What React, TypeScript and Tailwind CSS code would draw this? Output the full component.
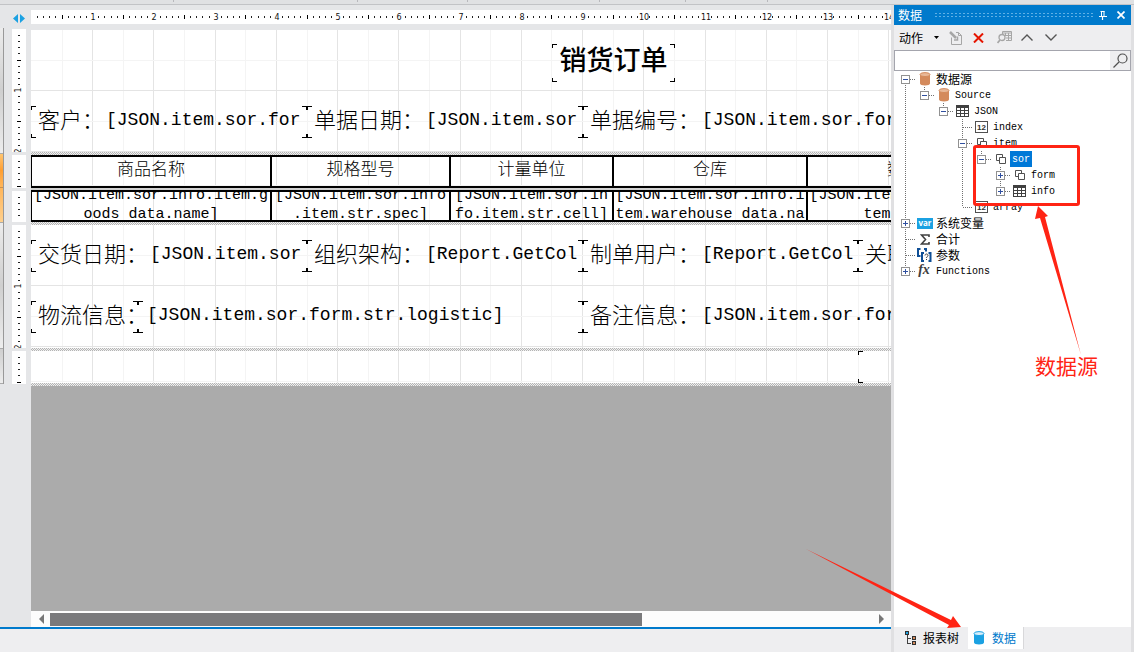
import { useState } from "react";

const UNIT = 61.23;

function HorizontalRuler() {
  const steps = Array.from({ length: 320 }, (_, i) => i + 1);
  return (
    <svg className="block h-[14px] w-full bg-white" shapeRendering="crispEdges" aria-hidden="true">
      {steps.map((i) => {
        const x = Math.round((i * UNIT) / 10);
        if (i % 10 === 0) {
          return (
            <text key={i} x={x + 1} y="10" textAnchor="middle" fontSize="8" fontFamily="DejaVu Sans" fill="#111">
              {i / 10}
            </text>
          );
        }
        if (i % 10 === 5) return <rect key={i} x={x} y="5" width="1" height="4" fill="#000" />;
        return <rect key={i} x={x} y="6" width="1" height="2" fill="#222" />;
      })}
    </svg>
  );
}

function VerticalRuler({ height }: { height: number }) {
  const count = Math.floor(((height + 2) * 10) / UNIT);
  const steps = Array.from({ length: count }, (_, i) => i + 1);
  return (
    <svg width="14" height={height} className="block bg-white" shapeRendering="crispEdges" aria-hidden="true">
      {steps.map((i) => {
        const y = Math.round((i * UNIT) / 10);
        if (i % 10 === 0) {
          return (
            <text key={i} x="9" y={y} textAnchor="middle" fontSize="8" fontFamily="DejaVu Sans" fill="#111" transform={`rotate(-90 9 ${y})`}>
              {i / 10}
            </text>
          );
        }
        if (i % 10 === 5) return <rect key={i} x="5" y={y} width="4" height="1" fill="#000" />;
        return <rect key={i} x="6" y={y} width="2" height="1" fill="#222" />;
      })}
    </svg>
  );
}

function Grid() {
  const lines = Array.from({ length: 64 }, (_, i) => i + 1);
  return (
    <svg className="absolute inset-0 h-full w-full" shapeRendering="crispEdges" aria-hidden="true">
      {lines.map((i) => (
        <rect key={`v${i}`} x={Math.round((i * UNIT) / 2)} y="0" width="1" height="100%" fill={i % 2 ? "#f4f4f4" : "#e4e4e4"} />
      ))}
      {lines.slice(0, 4).map((i) => (
        <rect key={`h${i}`} x="0" y={Math.round((i * UNIT) / 2) - 1} width="100%" height="1" fill={i % 2 ? "#f4f4f4" : "#e4e4e4"} />
      ))}
    </svg>
  );
}

function Hatch() {
  return <div className="h-[3px] shrink-0 bg-[repeating-conic-gradient(#b4b4b4_0_25%,#f0f0f0_0_50%)] bg-[length:2px_2px]" />;
}

function Corners() {
  return (
    <>
      <span className="absolute top-0 left-0 h-1 w-[5px] border-t border-l border-black" />
      <span className="absolute top-0 right-0 h-1 w-[5px] border-t border-r border-black" />
      <span className="absolute bottom-0 left-0 h-1 w-[5px] border-b border-l border-black" />
      <span className="absolute right-0 bottom-0 h-1 w-[5px] border-r border-b border-black" />
    </>
  );
}

function Field({ label, value, width }: { label?: string; value?: string; width: string }) {
  return (
    <div className={`relative h-8 shrink-0 ${width}`}>
      <Corners />
      <div className="flex h-7 items-start overflow-hidden pl-[7px] whitespace-pre">
        {label && <span className="text-[22px] leading-6 font-light">{label}</span>}
        {value && <span className="ml-0.5 font-['Liberation_Mono',monospace] text-[18px] leading-7">{value}</span>}
      </div>
    </div>
  );
}

const columns = [
  { title: "商品名称", lines: ["[JSON.item.sor.info.item.g", "oods data.name]"] },
  { title: "规格型号", lines: ["[JSON.item.sor.info", ".item.str.spec]"] },
  { title: "计量单位", lines: ["[JSON.item.sor.in", "fo.item.str.cell]"] },
  { title: "仓库", lines: ["[JSON.item.sor.info.i", "tem.warehouse data.na"] },
  { title: "数量", lines: ["[JSON.item.sor.info.i", "tem.nums]"] },
];

function ColumnWidths() {
  return (
    <colgroup>
      <col className="w-[240px]" />
      <col className="w-[179px]" />
      <col className="w-[163px]" />
      <col className="w-[194px]" />
      <col className="w-[194px]" />
    </colgroup>
  );
}

function ReportPage() {
  return (
    <>
      <section className="relative h-[122px] shrink-0 overflow-hidden bg-white pt-[14px]">
        <Grid />
        <div className="relative ml-[521px] h-[38px] w-[123px]">
          <Corners />
          <h1 className="text-center text-[27px] leading-[30px] font-medium">销货订单</h1>
        </div>
        <div className="relative mt-6 flex">
          <Field label="客户：" value="[JSON.item.sor.for" width="w-[276px]" />
          <Field label="单据日期：" value="[JSON.item.sor" width="w-[276px]" />
          <Field label="单据编号：" value="[JSON.item.sor.form" width="w-[400px]" />
        </div>
      </section>
      <Hatch />
      <section className="relative h-[33px] shrink-0 overflow-hidden bg-white">
        <Grid />
        <table className="relative -ml-px w-[970px] table-fixed border-collapse">
          <ColumnWidths />
          <thead>
            <tr>
              {columns.map((c) => (
                <th key={c.title} scope="col" className="h-[31px] border-2 border-black p-0 pb-2 text-[17px] leading-5 font-light">
                  {c.title}
                </th>
              ))}
            </tr>
          </thead>
        </table>
      </section>
      <div className="h-0.5 shrink-0 bg-[#d0d0d0]" />
      <section className="relative h-8 shrink-0 overflow-hidden bg-white">
        <Grid />
        <table className="relative -ml-px w-[970px] table-fixed border-collapse">
          <ColumnWidths />
          <tbody>
            <tr>
              {columns.map((c) => (
                <td key={c.title} className="h-[30px] border-2 border-black p-0 text-center font-['Liberation_Mono',monospace] text-[15px] leading-[19px]">
                  <div className="h-7 overflow-hidden whitespace-pre">
                    <div className="-mt-1.5">{c.lines[0]}</div>
                    <div>{c.lines[1]}</div>
                  </div>
                </td>
              ))}
            </tr>
          </tbody>
        </table>
      </section>
      <Hatch />
      <section className="relative flex h-[123px] shrink-0 flex-col gap-[29px] overflow-hidden bg-white pt-[15px]">
        <Grid />
        <div className="relative flex">
          <Field label="交货日期：" value="[JSON.item.sor" width="w-[276px]" />
          <Field label="组织架构：" value="[Report.GetCol" width="w-[276px]" />
          <Field label="制单用户：" value="[Report.GetCol" width="w-[275px]" />
          <Field label="关联单据：" width="w-[275px]" />
        </div>
        <div className="relative flex">
          <Field label="物流信息：" width="w-[107px]" />
          <Field value="[JSON.item.sor.form.str.logistic]" width="w-[445px]" />
          <Field label="备注信息：" value="[JSON.item.sor.form" width="w-[400px]" />
        </div>
      </section>
      <Hatch />
      <section className="relative flex h-8 shrink-0 overflow-hidden bg-white pl-[827px]">
        <Grid />
        <Field width="w-[275px]" />
      </section>
      <Hatch />
    </>
  );
}

function DatabaseIcon({ color, shine }: { color: string; shine: string }) {
  return (
    <svg width="12" height="14" viewBox="0 0 12 14" aria-hidden="true">
      <path d="M1 2.5v9c0 1 2.2 2 5 2s5-1 5-2v-9z" fill={color} />
      <ellipse cx="6" cy="2.6" rx="5" ry="2" fill={shine} stroke={color} />
    </svg>
  );
}

function TableIcon() {
  return (
    <svg width="13" height="12" viewBox="0 0 13 12" shapeRendering="crispEdges" aria-hidden="true">
      <path d="M0 0h13v12H0z" fill="#404040" />
      <path d="M1 3h3v2H1zM5 3h3v2H5zM9 3h3v2H9zM1 6h3v2H1zM5 6h3v2H5zM9 6h3v2H9zM1 9h3v2H1zM5 9h3v2H5zM9 9h3v2H9z" fill="#fff" />
    </svg>
  );
}

function ObjectIcon() {
  return (
    <svg width="12" height="12" viewBox="0 0 12 12" fill="#fff" stroke="#505050" aria-hidden="true">
      <path d="M1.5 1.5h6v6h-6z" />
      <path d="M4.5 4.5h6v6h-6z" />
    </svg>
  );
}

function NumberIcon() {
  return (
    <svg width="13" height="12" viewBox="0 0 13 12" aria-hidden="true">
      <rect x=".5" y=".5" width="12" height="11" fill="#fff" stroke="#505050" />
      <text x="6.5" y="9" textAnchor="middle" fontSize="8" fontWeight="700" fontFamily="Liberation Sans" fill="#303030">12</text>
    </svg>
  );
}

function VarIcon() {
  return (
    <svg width="16" height="11" viewBox="0 0 16 11" aria-hidden="true">
      <rect width="16" height="11" fill="#1ba1e2" />
      <text x="8" y="8" textAnchor="middle" fontSize="8" fontWeight="700" fontFamily="Open Sans" fill="#fff">var</text>
    </svg>
  );
}

function SumIcon() {
  return (
    <svg width="10" height="11" viewBox="0 0 10 11" fill="none" stroke="#404040" strokeWidth="1.6" aria-hidden="true">
      <path d="M9 3V1H1.5L5.5 5.5 1.5 10H9V8" />
    </svg>
  );
}

function ParamIcon() {
  return (
    <svg width="15" height="14" viewBox="0 0 15 14" fill="none" stroke="#0f4f96" strokeWidth="2" aria-hidden="true">
      <path d="M3.5 1H1v7h2.500M7 1h2v2.500M7 5H5v8h2M11.500 5h2v8h-2" />
      <path d="M8 7.500c0-2 3-2 3 0 0 1-1.500 1-1.500 2.500M9.500 11v1" stroke="#404040" strokeWidth="1" />
    </svg>
  );
}

function FxIcon() {
  return (
    <svg width="15" height="14" viewBox="0 0 15 14" aria-hidden="true">
      <text x="7" y="10" textAnchor="middle" fontSize="14" fontStyle="italic" fontWeight="700" fontFamily="Liberation Serif" fill="#404040">fx</text>
    </svg>
  );
}

const icons = {
  db: <DatabaseIcon color="#d48a5c" shine="#e8b898" />,
  table: <TableIcon />,
  object: <ObjectIcon />,
  number: <NumberIcon />,
  var: <VarIcon />,
  sum: <SumIcon />,
  param: <ParamIcon />,
  fx: <FxIcon />,
};

type TreeRow = {
  label: string;
  icon: keyof typeof icons;
  // one entry per ancestor level, true where its line runs on
  guides: boolean[];
  box?: "+" | "-";
  first?: boolean;
  last?: boolean;
};

const rows: TreeRow[] = [
  { label: "数据源", icon: "db", guides: [], box: "-", first: true },
  { label: "Source", icon: "db", guides: [true], box: "-", last: true },
  { label: "JSON", icon: "table", guides: [true, false], box: "-", last: true },
  { label: "index", icon: "number", guides: [true, false, false] },
  { label: "item", icon: "object", guides: [true, false, false], box: "-" },
  { label: "sor", icon: "object", guides: [true, false, false, true], box: "-", last: true },
  { label: "form", icon: "object", guides: [true, false, false, true, false], box: "+" },
  { label: "info", icon: "table", guides: [true, false, false, true, false], box: "+", last: true },
  { label: "array", icon: "number", guides: [true, false, false], last: true },
  { label: "系统变量", icon: "var", guides: [], box: "+" },
  { label: "合计", icon: "sum", guides: [] },
  { label: "参数", icon: "param", guides: [] },
  { label: "Functions", icon: "fx", guides: [], box: "+", last: true },
];

function Branch({ row }: { row: TreeRow }) {
  return (
    <svg width="19" height="16" viewBox="0 0 19 16" className="shrink-0" shapeRendering="crispEdges" aria-hidden="true">
      <g stroke="#707070" strokeDasharray="1 1">
        {!row.first && <path d="M9.5 0v8" />}
        {!row.last && <path d="M9.5 8v8" />}
        <path d="M10 8.5h9" />
      </g>
      {row.box && (
        <>
          <rect x="5.5" y="4.5" width="8" height="8" fill="#fff" stroke="#919191" />
          <path d={row.box === "+" ? "M7 8.5h5M9.5 6v5" : "M7 8.5h5"} stroke="#3050a0" />
        </>
      )}
    </svg>
  );
}

function DataTree() {
  const [selected, setSelected] = useState("sor");
  return (
    <ul role="tree" className="pl-0.5">
      {rows.map((row) => {
        const latin = /^[A-Za-z]/.test(row.label);
        return (
          <li key={row.label} role="treeitem" aria-selected={selected === row.label} onClick={() => setSelected(row.label)} className="flex h-4 cursor-default items-center">
            {row.guides.map((on, i) => (
              <svg key={i} width="19" height="16" className="shrink-0" shapeRendering="crispEdges" aria-hidden="true">
                {on && <path d="M9.5 0v16" stroke="#707070" strokeDasharray="1 1" />}
              </svg>
            ))}
            <Branch row={row} />
            <span className="flex w-[19px] shrink-0 justify-center">{icons[row.icon]}</span>
            <span
              className={`px-0.5 ${latin ? "pt-0.5 font-['Liberation_Mono',monospace] text-[10px] leading-[14px]" : "text-[12px] leading-4"} ${selected === row.label ? "bg-[#0078d7] text-white" : "text-black"}`}
            >
              {row.label}
            </span>
          </li>
        );
      })}
    </ul>
  );
}

function ScrollArrow({ label, d }: { label: string; d: string }) {
  return (
    <button type="button" aria-label={label} className="flex h-4 w-[19px] shrink-0 items-center justify-center">
      <svg width="6" height="10" viewBox="0 0 6 10" fill="#777">
        <path d={d} />
      </svg>
    </button>
  );
}

function BandHandles() {
  return (
    <div className="mt-[18px] flex w-1 shrink-0 flex-col border-r border-[#999]">
      <div className="h-[126px] border-b border-[#aaa] bg-gradient-to-b from-[#ececec] via-[#cfcfcf] to-[#ededed]" />
      <div className="h-[34px] border-b border-[#c89050] bg-gradient-to-b from-[#ffc56f] via-[#ff9f30] to-[#ffb65a]" />
      <div className="h-[35px] border-b border-[#aaa] bg-gradient-to-b from-[#ffb65a] to-[#ffd08c]" />
      <div className="h-[126px] border-b border-[#aaa] bg-gradient-to-b from-[#ececec] via-[#cfcfcf] to-[#ededed]" />
      <div className="h-[35px] border-b border-[#aaa] bg-gradient-to-b from-[#cfcfcf] to-[#ededed]" />
    </div>
  );
}

function Designer() {
  return (
    <main className="flex min-w-0 flex-1 flex-col bg-[#e5e6e8]">
      <div className="flex min-h-0 flex-1">
        <div className="flex w-[31px] shrink-0">
          <div className="flex items-start pt-[5px]">
            <BandHandles />
          </div>
          <div className="ml-2 flex flex-col gap-[3px] pt-[9px]">
            <svg width="14" height="9" viewBox="0 0 14 9" fill="#1ba1e2" className="mb-[3px]" aria-hidden="true">
              <path d="M6 0v9L1 4.5zM8 0v9l5-4.5z" />
            </svg>
            <VerticalRuler height={123} />
            <VerticalRuler height={33} />
            <VerticalRuler height={31} />
            <VerticalRuler height={123} />
            <VerticalRuler height={33} />
          </div>
        </div>
        <div className="flex min-w-0 flex-1 flex-col pt-[5px]">
          <HorizontalRuler />
          <div className="mt-1.5 flex min-h-0 flex-1 flex-col overflow-hidden bg-[#ababab]">
            <ReportPage />
          </div>
          <div className="flex h-4 shrink-0 items-center bg-[#fcfcfc]">
            <ScrollArrow label="向左滚动" d="M6 0v10L1 5z" />
            <div className="h-[13px] flex-1">
              <div className="h-full w-[72%] bg-[#7a7a7c]" />
            </div>
            <ScrollArrow label="向右滚动" d="M0 0v10l5-5z" />
          </div>
        </div>
      </div>
      <div className="h-[25px] shrink-0 border-t-2 border-[#007acc] bg-[#eeeef0]" />
    </main>
  );
}

function Annotations() {
  return (
    <div className="pointer-events-none">
      <div className="absolute top-[140px] left-[79px] h-[61px] w-[107px] rounded-[3px] border-3 border-[#ff2414]" />
      <svg width="60" height="160" viewBox="0 0 60 160" className="absolute top-[200px] left-[136px]" fill="#ff2414" aria-hidden="true">
        <path d="M8 1L18 11 15 12 51 150 10 13 5 14z" />
      </svg>
      <p className="absolute top-[348px] left-[141px] text-[21px] leading-6 text-[#ff2414]">数据源</p>
      <svg width="160" height="82" viewBox="0 0 160 82" className="absolute bottom-[23px] left-[-90px]" fill="#ff2414" aria-hidden="true">
        <path d="M2 2L147 73l2-4 8 11-14 1 2-3z" />
      </svg>
    </div>
  );
}

function DataPanel() {
  const [query, setQuery] = useState("");
  const [tab, setTab] = useState<"tree" | "data">("data");

  return (
    <aside className="relative flex w-[243px] shrink-0 flex-col border-x-[3px] border-[#e0e0e2] bg-[#eeeef0] text-[12px]">
      <header className="flex h-5 shrink-0 items-center bg-[#007acc] px-1 text-white">
        <h2 className="leading-5">数据</h2>
        <div className="mr-1 ml-3 h-1.5 flex-1 bg-[radial-gradient(#5fb0e6_1px,transparent_1px)] bg-[length:4px_3px]" />
        <button type="button" aria-label="固定" className="mr-1.5 flex w-3 justify-center">
          <svg width="8" height="9" viewBox="0 0 8 9" fill="none" stroke="#fff">
            <path d="M2.5 0v5M1.5.5h4M5 0v5" />
            <path d="M0 5.5h8M3.500 5.500v3.500" strokeWidth="1.2" />
          </svg>
        </button>
        <button type="button" aria-label="关闭" className="flex w-3 justify-center">
          <svg width="8" height="8" viewBox="0 0 8 8" stroke="#fff" strokeWidth="1.7">
            <path d="M.5.5l7 7M7.5.5l-7 7" />
          </svg>
        </button>
      </header>

      <div className="flex h-[25px] shrink-0 items-center pl-[5px]">
        <button type="button" className="flex w-[50px] items-center gap-[11px] leading-5">
          动作
          <svg width="5" height="3" viewBox="0 0 5 3">
            <path d="M0 0h5L2.5 3z" />
          </svg>
        </button>
        <button type="button" aria-label="编辑" className="flex w-6 shrink-0 items-center">
          <svg width="14" height="14" viewBox="0 0 14 14" fill="none" stroke="#a6a6a6">
            <path d="M2.5 6.5v7h10v-9l-3-3H7M9.5 1.5v3h3" />
            <path d="M1 1l6 6" strokeWidth="2.5" />
            <path d="M5 9h3.5V5.5" strokeWidth="1.5" />
          </svg>
        </button>
        <button type="button" aria-label="删除" className="flex w-6 shrink-0 items-center">
          <svg width="11" height="10" viewBox="0 0 11 10" stroke="#e51400" strokeWidth="2">
            <path d="M1 .5l9 9M10 .5l-9 9" />
          </svg>
        </button>
        <button type="button" aria-label="查看数据" className="flex w-6 shrink-0 items-center">
          <svg width="16" height="15" viewBox="0 0 16 15" fill="none" stroke="#a6a6a6">
            <path d="M5.5 4V1.5h9v9H9M5 3h10" />
            <path d="M8 5.5h6.500M9 8h5.500M8.500 3v3M11.500 3v7" />
            <circle cx="5" cy="7.5" r="3" strokeWidth="1.3" />
            <path d="M3 10l-2.500 3" strokeWidth="1.8" />
          </svg>
        </button>
        <button type="button" aria-label="上移" className="flex w-6 shrink-0 items-center">
          <svg width="12" height="7" viewBox="0 0 12 7" fill="none" stroke="#555" strokeWidth="1.4">
            <path d="M.5 6.5L6 1l5.500 5.500" />
          </svg>
        </button>
        <button type="button" aria-label="下移" className="flex w-6 shrink-0 items-center">
          <svg width="12" height="7" viewBox="0 0 12 7" fill="none" stroke="#555" strokeWidth="1.4">
            <path d="M.5.5L6 6 11.500.5" />
          </svg>
        </button>
      </div>

      <div className="flex h-[21px] shrink-0 border border-[#a4a5ad] bg-white">
        <input type="search" aria-label="搜索" value={query} onChange={(e) => setQuery(e.target.value)} className="min-w-0 flex-1 px-1 outline-none" />
        <button type="button" aria-label="搜索" className="flex w-5 items-center justify-center bg-[#eeeef0]">
          <svg width="15" height="15" viewBox="0 0 15 15" fill="none" stroke="#505050" strokeWidth="1.2">
            <circle cx="9.5" cy="5.5" r="4.5" />
            <path d="M6 9L.5 14.5" />
          </svg>
        </button>
      </div>

      <div className="min-h-0 flex-1 bg-white">
        <DataTree />
      </div>

      <div role="tablist" className="flex h-[25px] shrink-0 items-start">
        <button type="button" role="tab" aria-selected={tab === "tree"} onClick={() => setTab("tree")} className={`flex h-[22px] w-[74px] items-center gap-1.5 pl-[11px] ${tab === "tree" ? "bg-white text-[#007acc]" : "text-black"}`}>
          <svg width="12" height="14" viewBox="0 0 12 14" shapeRendering="crispEdges" aria-hidden="true">
            <path d="M2.5 4v8.500H6M2.5 7.500H6" fill="none" stroke="#404040" />
            <rect x=".5" y=".5" width="3" height="3" fill="#1ba1e2" stroke="#303030" />
            <rect x="7.5" y="5.5" width="3" height="3" fill="#d48a5c" stroke="#303030" />
            <rect x="7.5" y="10.5" width="3" height="3" fill="#d48a5c" stroke="#303030" />
          </svg>
          报表树
        </button>
        <button type="button" role="tab" aria-selected={tab === "data"} onClick={() => setTab("data")} className={`flex h-[22px] w-14 items-center gap-[7px] border-r border-[#d8d8da] pl-[5px] ${tab === "data" ? "bg-white text-[#007acc]" : "text-black"}`}>
          <DatabaseIcon color="#1ba1e2" shine="#d5edfa" />
          数据
        </button>
      </div>
      <Annotations />
    </aside>
  );
}

export default function App() {
  return (
    <div className="flex h-screen min-h-[480px] flex-col overflow-hidden bg-[#eeeef0] font-['Noto_Sans_CJK_SC',sans-serif] text-black">
      <div className="flex h-[5px] shrink-0 border-b border-[#c2c3c6] bg-[#e0e1e3]">
        <span className="h-0.5 w-[174px] border-r border-[#b8b8bc]" />
        <span className="h-0.5 w-[184px] border-r border-[#b8b8bc]" />
        <span className="h-0.5 w-[110px] border-r border-[#b8b8bc]" />
        <span className="h-0.5 w-[132px] border-r border-[#b8b8bc]" />
        <span className="h-0.5 w-[86px] border-r border-[#b8b8bc]" />
        <span className="h-0.5 w-[82px] border-r border-[#b8b8bc]" />
      </div>
      <div className="flex min-h-0 flex-1">
        <Designer />
        <DataPanel />
      </div>
    </div>
  );
}
